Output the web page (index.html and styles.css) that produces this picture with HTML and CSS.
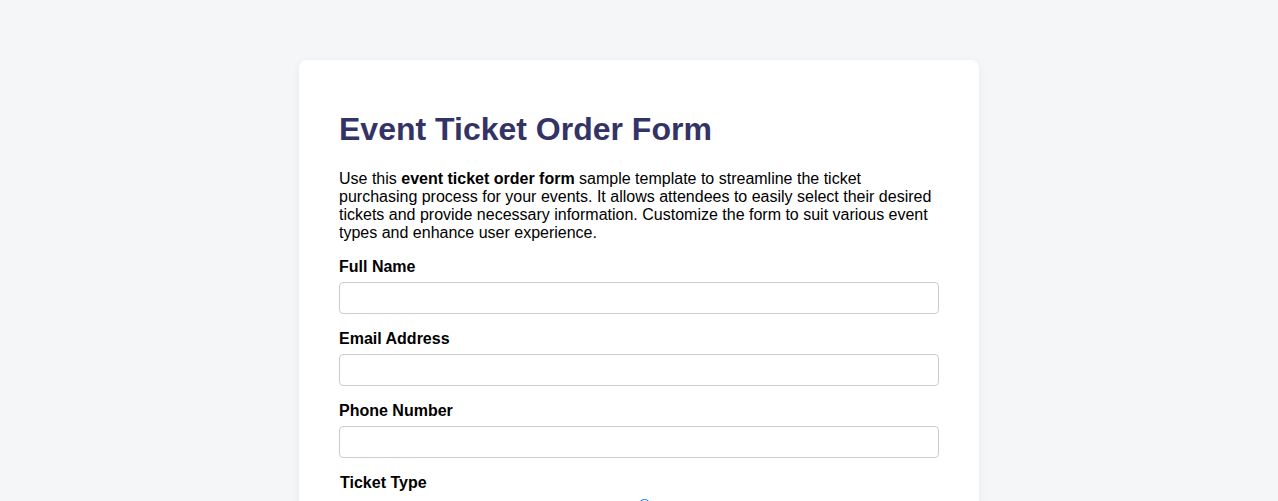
FILE: index.html
```html
<!DOCTYPE html>
<html lang="en">
<head>
<meta charset="utf-8">
<title>Event Ticket Order Form</title>
<link rel="stylesheet" href="styles.css">
</head>
<body>
<main class="page">
  <form class="card">
    <h1 class="title">Event Ticket Order Form</h1>
    <p class="intro">Use this <strong>event ticket order form</strong> sample template to streamline the ticket purchasing process for your events. It allows attendees to easily select their desired tickets and provide necessary information. Customize the form to suit various event types and enhance user experience.</p>
    <div class="field">
      <label class="label" for="name">Full Name</label>
      <input class="input" id="name" type="text">
    </div>
    <div class="field">
      <label class="label" for="email">Email Address</label>
      <input class="input" id="email" type="email">
    </div>
    <div class="field">
      <label class="label" for="phone">Phone Number</label>
      <input class="input" id="phone" type="tel">
    </div>
    <fieldset class="group">
      <legend class="legend">Ticket Type</legend>
      <div class="options">
        <label class="option"><input class="radio" type="radio" name="ticket" checked><span>General Admission</span></label>
      </div>
    </fieldset>
  </form>
</main>
</body>
</html>
```
FILE: styles.css
```css
html, body {
  margin: 0;
  padding: 0;
}
body {
  background: #f5f6f8;
  font-family: "Liberation Sans", Arial, sans-serif;
  color: #000;
  font-size: 16px;
}
.page {
  padding-top: 60px;
  display: flex;
  justify-content: center;
}
.card {
  width: 600px;
  background: #fff;
  border-radius: 8px;
  padding: 40px;
  box-shadow: 0 2px 10px rgba(0, 0, 0, 0.06);
}
.title {
  margin: 11px 0 22px;
  font-size: 32px;
  font-weight: bold;
  color: #333366;
}
.intro {
  margin: 0 0 16px;
  line-height: 18px;
}
.field {
  display: flex;
  flex-direction: column;
  gap: 6px;
  margin-bottom: 16px;
}
.label {
  font-weight: bold;
  line-height: 18px;
}
.input {
  box-sizing: border-box;
  height: 32px;
  width: 100%;
  border: 1px solid #ccc;
  border-radius: 4px;
  margin: 0;
  padding: 6px 8px;
  font: inherit;
}
.group {
  border: 0;
  margin: 0;
  padding: 0;
}
.legend {
  font-weight: bold;
  line-height: 18px;
  padding: 0 0 0 1px;
  margin-bottom: 7px;
}
.options {
  display: flex;
  justify-content: center;
}
.option {
  display: flex;
  flex-direction: column;
  align-items: center;
  gap: 6px;
  margin-left: 12px;
}
.radio {
  margin: 0;
  width: 13px;
  height: 13px;
  accent-color: #0075ff;
}
```
